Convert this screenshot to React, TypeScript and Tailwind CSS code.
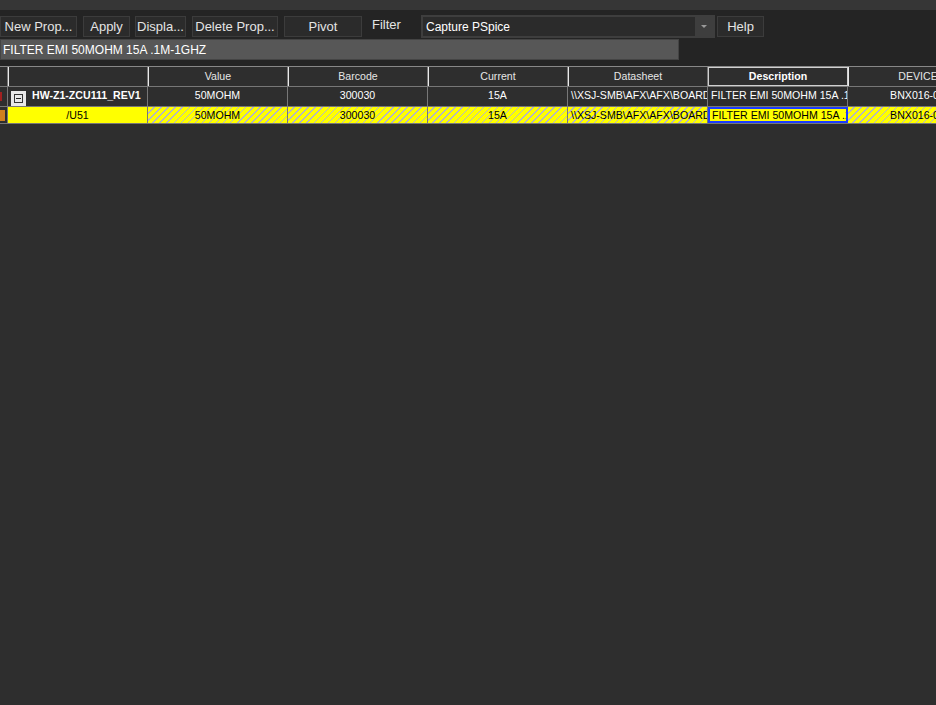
const cols = [
  { key: "name", label: "", w: "w-[140px]" },
  { key: "value", label: "Value", w: "w-[140px]" },
  { key: "barcode", label: "Barcode", w: "w-[140px]" },
  { key: "current", label: "Current", w: "w-[140px]" },
  { key: "datasheet", label: "Datasheet", w: "w-[140px]" },
  { key: "description", label: "Description", w: "w-[140px]" },
  { key: "device", label: "DEVICE", w: "w-[140px]" },
];

const rows = [
  {
    name: "HW-Z1-ZCU111_REV1",
    value: "50MOHM",
    barcode: "300030",
    current: "15A",
    datasheet: "\\\\XSJ-SMB\\AFX\\AFX\\BOARDS",
    description: "FILTER EMI 50MOHM 15A .1M-1GHZ",
    device: "BNX016-01",
  },
  {
    name: "/U51",
    value: "50MOHM",
    barcode: "300030",
    current: "15A",
    datasheet: "\\\\XSJ-SMB\\AFX\\AFX\\BOARDS",
    description: "FILTER EMI 50MOHM 15A .1M-1GHZ",
    device: "BNX016-01",
  },
];

function ToolButton({ label, w }: { label: string; w: string }) {
  return (
    <div
      className={`${w} h-[21px] flex items-center justify-center border border-[#3c3c3c] bg-[#2b2b2b] text-[13px] text-[#e4e4e4] whitespace-nowrap`}
    >
      {label}
    </div>
  );
}

export default function App() {
  const hatch =
    "bg-[repeating-linear-gradient(135deg,#ffff00_0px,#ffff00_4px,#b4b4c8_4px,#b4b4c8_5px)]";

  return (
    <div
      className="w-[936px] h-[705px] overflow-hidden bg-[#2e2e2e] flex flex-col"
      style={{ fontFamily: '"Liberation Sans", Arial, sans-serif' }}
    >
      <div className="h-[10px] bg-[#363636]" />

      <div className="bg-[#242424] pt-[5px] pb-[6px] flex flex-col">
        <div className="flex items-center h-[23px] mb-[1px]">
          <ToolButton label="New Prop..." w="w-[77px]" />
          <div className="w-[6px]" />
          <ToolButton label="Apply" w="w-[47px]" />
          <div className="w-[5px]" />
          <ToolButton label="Displa..." w="w-[51px]" />
          <div className="w-[6px]" />
          <ToolButton label="Delete Prop..." w="w-[86px]" />
          <div className="w-[6px]" />
          <ToolButton label="Pivot" w="w-[78px]" />
          <span className="ml-[10px] w-[49px] text-[13px] text-[#e4e4e4] -mt-[4px]">Filter</span>
          <div className="w-[294px] h-[23px] bg-[#3e3e3e] p-[2px] flex">
            <div className="flex-1 bg-[#2b2b2b] flex items-center px-[3px] text-[12px] text-white pt-[1px]">
              Capture PSpice
            </div>
            <div className="w-[18px] flex items-center justify-center">
              <div className="w-0 h-0 border-l-[3px] border-r-[3px] border-t-[3px] border-l-transparent border-r-transparent border-t-[#9a9a9a]" />
            </div>
          </div>
          <div className="w-[2px]" />
          <ToolButton label="Help" w="w-[47px]" />
        </div>
        <div className="w-[679px] h-[21px] bg-[#575757] border border-[#444] flex items-center px-[2px] text-[12px] text-white">
          FILTER EMI 50MOHM 15A .1M-1GHZ
        </div>
      </div>

      <div className="text-[10.6px] leading-none">
        <div className="flex h-[20px] border-t border-[#888]">
          <div className="w-[8px] shrink-0 border-r border-[#777] bg-[#2e2e2e]" />
          {cols.map((c) => (
            <div
              key={c.key}
              className={`${c.w} shrink-0 flex items-center justify-center whitespace-nowrap overflow-hidden ${
                c.key === "description"
                  ? "border border-[#d0d0d0] font-bold text-white"
                  : "border-r border-r-[#777] border-l border-l-[#e8e8e8] text-[#e6e6e6]"
              }`}
            >
              {c.label}
            </div>
          ))}
        </div>

        <div className="flex h-[21px] border-t border-[#777] border-b bg-[#2e2e2e]">
          <div className="w-[8px] shrink-0 border-r border-[#777] flex items-center">
            <div className="w-[2px] h-[9px] bg-[#a02020]" />
          </div>
          {cols.map((c) => (
            <div
              key={c.key}
              className={`${c.w} shrink-0 flex items-start pt-[3px] border-r border-[#777] overflow-hidden whitespace-nowrap ${
                c.key === "name"
                  ? "pl-[3px] gap-[6px] font-bold text-white"
                  : c.key === "datasheet" || c.key === "description"
                  ? "pl-[3px] text-white"
                  : "justify-center text-white"
              }`}
            >
              {c.key === "name" && (
                <div className="w-[15px] h-[15px] shrink-0 mt-[1px] bg-[#e8e8e8] flex items-center justify-center">
                  <div className="w-[9px] h-[9px] border border-[#333] flex items-center justify-center">
                    <div className="w-[5px] h-[1px] bg-[#222]" />
                  </div>
                </div>
              )}
              <span className="shrink-0">{rows[0][c.key as keyof (typeof rows)[0]]}</span>
            </div>
          ))}
        </div>

        <div className="flex h-[17px] border-b border-[#777]">
          <div className="w-[8px] shrink-0 border-r border-[#777] bg-[#2e2e2e] flex items-center">
            <div className="w-[5px] h-[11px] bg-[#d08020]" />
          </div>
          {cols.map((c) => (
            <div
              key={c.key}
              className={`${c.w} shrink-0 flex items-center overflow-hidden whitespace-nowrap text-black ${
                c.key === "name" || c.key === "description" ? "bg-[#ffff00]" : hatch
              } ${
                c.key === "datasheet"
                  ? "pl-[3px] border-r border-r-[#777]"
                  : c.key === "description"
                  ? "pl-[2px] border-2 border-[#1a3cff]"
                  : "justify-center border-r border-r-[#777]"
              }`}
            >
              <span className="shrink-0">{rows[1][c.key as keyof (typeof rows)[1]]}</span>
            </div>
          ))}
        </div>
      </div>
    </div>
  );
}
